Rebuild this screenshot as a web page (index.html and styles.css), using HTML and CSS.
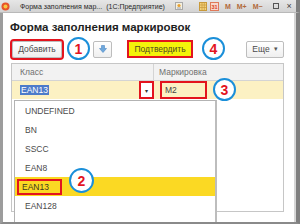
FILE: index.html
```html
<!DOCTYPE html>
<html lang="ru">
<head>
<meta charset="utf-8">
<title>Форма заполнения маркировок</title>
<link rel="stylesheet" href="styles.css">
</head>
<body>
<div class="screen">
  <div class="titlebar">
    <span class="app-icon">
      <svg width="9" height="9" viewBox="0 0 9 9"><circle cx="4.5" cy="4.5" r="4" fill="#e8542a"/><circle cx="4.5" cy="4.5" r="2" fill="#f7c843"/></svg>
    </span>
    <span class="tb-title">Форма заполнения мар...</span>
    <span class="tb-app">(1С:Предприятие)</span>
    <span class="tb-tools">
      <svg class="ti ti-pic" width="8" height="8" viewBox="0 0 8 8"><rect x="0.5" y="0.5" width="7" height="7" fill="#f4f0e0" stroke="#a9a9a9"/><circle cx="4" cy="3.5" r="1.6" fill="#e8a030"/><rect x="2" y="5.5" width="4" height="1" fill="#9aa0b0"/></svg>
      <svg class="ti ti-grid" width="8" height="9" viewBox="0 0 8 9"><rect x="0.5" y="0.5" width="7" height="8" fill="#f3d27a" stroke="#c99a3a"/><path d="M0.5 3H7.5M0.5 5.5H7.5M3 0.5V8.5M5.3 0.5V8.5" stroke="#c99a3a" stroke-width="0.7"/></svg>
      <svg class="ti ti-cal" width="9" height="9" viewBox="0 0 9 9"><rect x="0.5" y="0.5" width="8" height="8" fill="#f7d8cc" stroke="#e07a5a"/><text x="4.5" y="7" font-size="5.5" font-family="Liberation Sans, Arial, sans-serif" font-weight="700" fill="#d9442a" text-anchor="middle">31</text></svg>
      <span class="tm">M</span>
      <span class="tm">M+</span>
      <span class="tm">M−</span>
      <span class="win-max"></span>
      <span class="win-close">×</span>
    </span>
  </div>

  <div class="frame">
    <h1 class="form-title">Форма заполнения маркировок</h1>

    <div class="toolbar">
      <button class="btn btn-add">Добавить</button>
      <button class="btn btn-icon">
        <svg width="8" height="8" viewBox="0 0 8 8"><path d="M2.5 0.5H5.5V3.5H7.5L4 7.5L0.5 3.5H2.5Z" fill="#6fa8dc" stroke="#4a86c4" stroke-width="0.6"/></svg>
      </button>
      <button class="btn btn-confirm">Подтвердить</button>
      <button class="btn btn-more">Еще <span class="caret">▾</span></button>
    </div>

    <div class="grid">
      <div class="grid-head">
        <div class="col col-class">Класс</div>
        <div class="col col-mark">Маркировка</div>
      </div>
      <div class="grid-row">
        <div class="col col-class">
          <span class="sel">EAN13</span>
          <span class="dd-btn">▾</span>
        </div>
        <div class="col col-mark">
          <span class="mark-input">M2</span>
        </div>
      </div>
    </div>

    <ul class="dropdown">
      <li class="dd-item">UNDEFINED</li>
      <li class="dd-item">BN</li>
      <li class="dd-item">SSCC</li>
      <li class="dd-item">EAN8</li>
      <li class="dd-item dd-current"><span class="dd-mark">EAN13</span></li>
      <li class="dd-item">EAN128</li>
      <li class="dd-item">BUNDLE</li>
    </ul>

    <span class="badge badge-1">1</span>
    <span class="badge badge-2">2</span>
    <span class="badge badge-3">3</span>
    <span class="badge badge-4">4</span>
  </div>
</div>
</body>
</html>
```

FILE: styles.css
```css
* { box-sizing: border-box; }

html, body {
  margin: 0;
  padding: 0;
  width: 300px;
  height: 224px;
  overflow: hidden;
  background: #ffffff;
}

.screen {
  width: 300px;
  height: 224px;
  display: flex;
  flex-direction: column;
  font-family: "Liberation Sans", Arial, sans-serif;
  color: #444;
}

/* ---------- title bar ---------- */
.titlebar {
  height: 13px;
  flex: none;
  display: flex;
  align-items: center;
  background: linear-gradient(#e6e6e6, #d3d3d3);
  border-bottom: 1px solid #b9b9b9;
  border-right: 4px solid #7f7f7f;
  padding-left: 1px;
  font-size: 7px;
  color: #2a2a2a;
  white-space: nowrap;
}
.app-icon { display: flex; width: 9px; height: 9px; }
.tb-title { margin-left: 10px; }
.tb-app { margin-left: 4px; }
.tb-tools {
  display: flex;
  align-items: center;
  margin-left: 10px;
}
.ti { display: block; }
.ti-grid { margin-left: 16px; }
.ti-cal { margin-left: 3px; }
.tm {
  font-size: 7px;
  font-weight: 700;
  color: #b26a3a;
  margin-left: 6px;
}
.tm + .tm { margin-left: 6px; }
.win-max {
  width: 6px;
  height: 6px;
  border: 1px solid #555;
  margin-left: 10px;
}
.win-close {
  font-size: 9px;
  color: #444;
  margin-left: 8px;
  line-height: 8px;
}

/* ---------- window frame ---------- */
.frame {
  position: relative;
  flex: 1;
  overflow: hidden;
  border-left: 3px solid #9c9c9c;
  border-right: 4px solid #7f7f7f;
  border-bottom: 2px solid #8a8a8a;
  padding: 6px 12px 0 8px;
  box-shadow: inset -2px 0 0 #d6d6d6;
}

.form-title {
  margin: 0 0 0 -1px;
  height: 16px;
  font-size: 11.5px;
  line-height: 16px;
  font-weight: 700;
  color: #1e1e1e;
}

/* ---------- toolbar ---------- */
.toolbar {
  display: flex;
  align-items: center;
  height: 18px;
  margin-top: 5px;
}
.btn {
  font-family: inherit;
  font-size: 8.5px;
  color: #4a4a4a;
  height: 17px;
  padding: 0;
  margin: 0;
  border: 1px solid #bdbdbd;
  border-radius: 2px;
  background: linear-gradient(#ffffff, #efefef);
  display: flex;
  align-items: center;
  justify-content: center;
}
.btn-add {
  width: 50px;
  margin-left: 1px;
  outline: 2px solid #e3141e;
}
.btn-icon {
  width: 19px;
  margin-left: 31px;
}
.btn-confirm {
  width: 66px;
  height: 18px;
  margin-left: 15px;
  border: 2px solid #e3141e;
  border-radius: 0;
  background: #f4f20a;
  color: #4d4a20;
}
.btn-more {
  width: 38px;
  margin-left: auto;
}
.caret { font-size: 7px; margin-left: 4px; color: #555; }

/* ---------- grid ---------- */
.grid {
  margin-top: 5px;
  height: 149px;
  border: 1px solid #c6c6c6;
}
.grid-head, .grid-row { display: flex; }
.grid-head {
  height: 17px;
  background: #f2f2f2;
  border-bottom: 1px solid #d4d4d4;
  color: #707070;
  font-size: 8.5px;
}
.grid-row {
  height: 18px;
  background: #fcf1c3;
  font-size: 8.5px;
}
.col {
  display: flex;
  align-items: center;
}
.col-class {
  width: 142px;
  padding-left: 8px;
  border-right: 1px solid #d4d4d4;
}
.grid-row .col-class { border-right: none; width: 143px; padding-right: 1px; }
.col-mark { flex: 1; padding-left: 5px; }
.grid-row .col-mark { padding-left: 5px; }

.sel {
  background: #4d7bc9;
  color: #ffffff;
  line-height: 10px;
  padding: 0 1px;
}
.dd-btn {
  margin-left: auto;
  width: 15px;
  height: 18px;
  border: 2px solid #e3141e;
  background: #ffffff;
  font-size: 6px;
  color: #333;
  display: flex;
  align-items: center;
  justify-content: center;
}
.mark-input {
  width: 47px;
  height: 18px;
  border: 2px solid #e3141e;
  padding-left: 3px;
  display: flex;
  align-items: center;
  color: #444;
}

/* ---------- dropdown list ---------- */
.dropdown {
  position: absolute;
  left: 11px;
  top: 87px;
  width: 203px;
  height: 140px;
  margin: 0;
  padding: 0;
  list-style: none;
  background: #ffffff;
  border: 1px solid #b3b3b3;
  border-right: 2px solid #bdbdbd;
  font-size: 8.5px;
  color: #4a4a4a;
}
.dd-item {
  height: 19px;
  display: flex;
  align-items: center;
  padding-left: 10px;
}
.dd-current {
  background: #fbd923;
}
.dd-mark {
  margin-left: -8px;
  width: 45px;
  height: 16px;
  padding-left: 3px;
  border: 2px solid #e3141e;
  display: flex;
  align-items: center;
  color: #3a3a20;
}

/* ---------- numbered callouts ---------- */
.badge {
  position: absolute;
  width: 23px;
  height: 23px;
  border: 2.5px solid #1a8fd9;
  border-radius: 50%;
  background: #ffffff;
  color: #e3141e;
  font-size: 14px;
  font-weight: 700;
  display: flex;
  align-items: center;
  justify-content: center;
  z-index: 2;
}
.badge-1 { left: 64px; top: 24px; }
.badge-4 { left: 199px; top: 24px; }
.badge-3 { left: 210px; top: 65px; }
.badge-2 { left: 66px; top: 155px; width: 25px; height: 25px; }
```
